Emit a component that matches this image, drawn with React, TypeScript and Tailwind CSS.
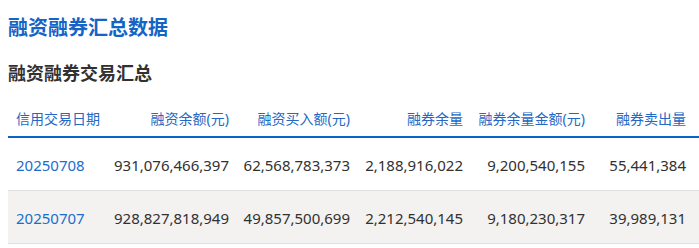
import React from 'react';

interface Row {
  date: string;
  rzye: string;
  rzmre: string;
  rqyl: string;
  rqylje: string;
  rqmcl: string;
}

const rows: Row[] = [
  { date: '20250708', rzye: '931,076,466,397', rzmre: '62,568,783,373', rqyl: '2,188,916,022', rqylje: '9,200,540,155', rqmcl: '55,441,384' },
  { date: '20250707', rzye: '928,827,818,949', rzmre: '49,857,500,699', rqyl: '2,212,540,145', rqylje: '9,180,230,317', rqmcl: '39,989,131' },
];

const font = { fontFamily: '"Noto Sans", "Noto Sans CJK SC", sans-serif' };

const App: React.FC = () => {
  return (
    <div className="bg-white w-[699px] h-[248px] overflow-hidden pl-2" style={font}>
      <h2 className="mt-[14px] text-[20px] leading-[28px] font-bold text-[#1464c6]">融资融券汇总数据</h2>
      <h3 className="mt-[18px] text-[18px] leading-[26px] font-bold text-[#323130]">融资融券交易汇总</h3>

      <table className="mt-[15px] w-[691px] table-fixed border-collapse">
        <colgroup>
          <col className="w-[100px]" />
          <col className="w-[129px]" />
          <col className="w-[121px]" />
          <col className="w-[113px]" />
          <col className="w-[122px]" />
          <col className="w-[106px]" />
        </colgroup>
        <thead>
          <tr className="h-[36px] border-b-2 border-[#0b62c8] text-[14px] text-[#2468c4] font-normal">
            <th className="text-left font-normal pl-2">信用交易日期</th>
            <th className="text-right font-normal pr-2">融资余额(元)</th>
            <th className="text-right font-normal pr-2">融资买入额(元)</th>
            <th className="text-right font-normal pr-2">融券余量</th>
            <th className="text-right font-normal pr-2">融券余量金额(元)</th>
            <th className="text-right font-normal pr-[13px]">融券卖出量</th>
          </tr>
        </thead>
        <tbody className="text-[15px] text-[#323130]">
          {rows.map((r, i) => (
            <tr key={r.date} className={`h-[53px] border-b border-[#e1dfdd] ${i % 2 === 1 ? 'bg-[#f3f2f1]' : ''}`}>
              <td className="pl-2 pt-[3px] text-[#1a6dcc]">{r.date}</td>
              <td className="text-right pr-2 pt-[3px]">{r.rzye}</td>
              <td className="text-right pr-2 pt-[3px]">{r.rzmre}</td>
              <td className="text-right pr-2 pt-[3px]">{r.rqyl}</td>
              <td className="text-right pr-2 pt-[3px]">{r.rqylje}</td>
              <td className="text-right pr-[13px] pt-[3px]">{r.rqmcl}</td>
            </tr>
          ))}
        </tbody>
      </table>
    </div>
  );
};

export default App;
